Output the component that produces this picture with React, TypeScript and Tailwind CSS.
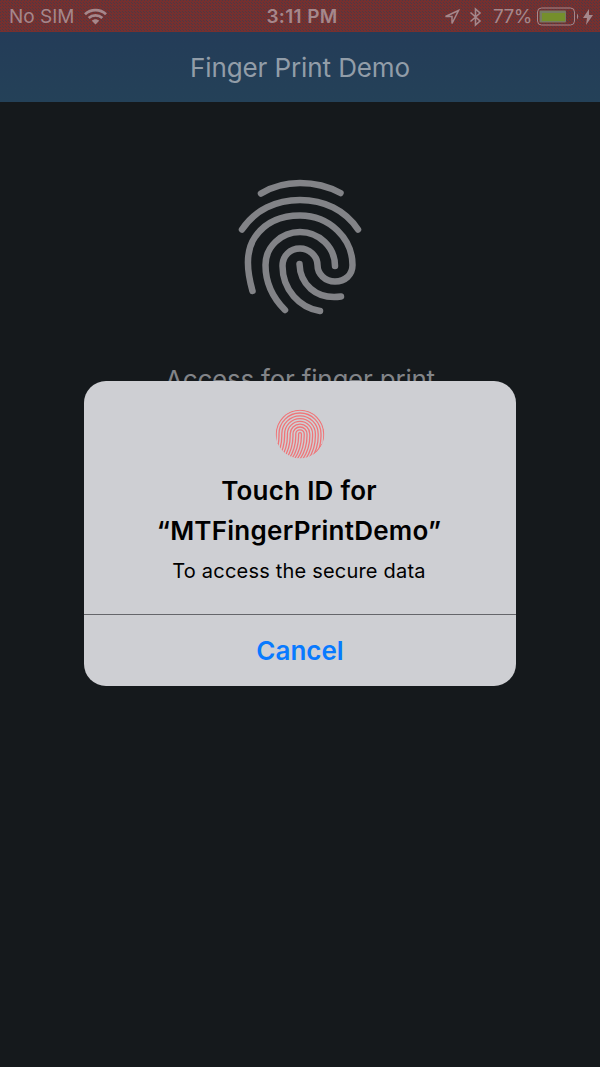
import React from "react";

const big = [
  "M41 33.5Q58 23 80 23T120.5 33",
  "M22 69.5C35 50 56 40 80 40S125 50 138 69.5",
  "M32.5 131C24.5 103 28 87 35 77C45 62.500 61 55.500 80 55.500C110 55.500 132.500 79 132.500 105C132.500 115 125 121.500 115 121.500C105 121.500 97.500 114 97.500 105C97.500 96 89 88.500 80 88.500C70 88.500 62.500 96 62.500 106C62.500 130 80 148 100 151",
  "M65 150C50 135 45.500 120 45.500 105C45.500 87 61 72 80 72C99 72 115 87 115 106",
  "M79.500 104C80 123 95 140 121 136.500",
];

const ridges = [1.4, 4.2, 7, 9.8, 12.6, 15.4, 18.2, 21, 23.8];

function StatusBar() {
  return (
    <div className="grid h-8 grid-cols-[1fr_auto_1fr] items-center bg-[repeating-conic-gradient(#76302f_0_37%,#4f3943_0_50%)] bg-size-[3px_3px] pt-px text-[19px] text-[#a6878b]">
      <div className="flex items-center gap-[9px] pl-[9px]">
        <span className="pt-[2px]">No SIM</span>
        <svg width="23" height="18" viewBox="0 0 23 18" fill="none" stroke="currentColor" strokeWidth="2.800">
          <path d="M1 6.300C7 .8 16 .8 22 6.300M4.700 10C8.500 6.500 14.500 6.500 18.300 10" />
          <path d="M7.800 12.800C10 10.800 13 10.800 15.200 12.800L11.500 16.500Z" fill="currentColor" stroke="none" />
        </svg>
      </div>
      <span className="pt-[2px] pl-[4px] font-semibold tracking-[0.35px]">3:11 PM</span>
      <div className="flex items-center justify-end pr-[7px]">
        <svg width="16" height="16" viewBox="0 0 16 16" fill="none" stroke="currentColor" strokeWidth="1.500"><path d="M14.500 1.500L1.500 7.500H8V14.500Z" /></svg>
        <svg className="ml-[9px]" width="13" height="20" viewBox="0 0 13 20" fill="none" stroke="currentColor" strokeWidth="1.600"><path d="M1.500 5.500L11 14L6.500 18V2L11 6L1.500 14.500" /></svg>
        <span className="ml-[11px] pt-[2px] tracking-[-0.5px]">77%</span>
        <svg className="ml-[5px]" width="44" height="20" viewBox="0 0 44 20">
          <rect x="0.500" y="1" width="37" height="17" rx="4" fill="none" stroke="#a6878b" strokeWidth="1" />
          <rect x="2.500" y="3.500" width="26.500" height="12" rx="1" fill="#777b63" />
          <rect x="5" y="6" width="23" height="8" fill="#758f2c" />
          <path d="M40 6.500Q42.500 9.500 40 12.500Z" fill="#a6878b" />
        </svg>
        <svg className="ml-[2px]" width="10" height="16" viewBox="0 0 10 16" fill="currentColor"><path d="M6 0L0 9H4L3 16L10 6H6Z" /></svg>
      </div>
    </div>
  );
}

function TouchIcon() {
  return (
    <svg width="50" height="50" viewBox="0 0 50 50" fill="none" stroke="#f07578" strokeWidth="1.300">
      <defs><clipPath id="disc"><circle cx="25" cy="25" r="24.300" /></clipPath></defs>
      <g clipPath="url(#disc)">
        {ridges.map((r) => (
          <path
            key={r}
            d={`M${25 - r - 7} 50Q${25 - r} 40 ${25 - r} 27V25A${r} ${r} 0 0 1 ${25 + r} 25V27Q${25 + r} 40 ${25 + r - 7} 50`}
          />
        ))}
        <path d="M3 34Q2 43 1 47M33 50Q41 45 47 35" />
      </g>
    </svg>
  );
}

export default function App() {
  return (
    <div className="relative h-[1067px] w-[600px] overflow-hidden bg-[#15191c] font-['Inter',sans-serif]">
      <StatusBar />
      <header className="flex h-[70px] items-center justify-center bg-linear-to-b from-[#243c58] to-[#244158] text-[26px] tracking-[-0.1px] text-[#929da8]">
        <h1>Finger Print Demo</h1>
      </header>
      <main className="flex flex-col items-center pt-[58px]">
        <svg width="160" height="170" viewBox="0 0 160 170" fill="none" stroke="#828387" strokeWidth="6.500" strokeLinecap="round" strokeLinejoin="round">
          {big.map((d) => <path key={d} d={d} />)}
        </svg>
        <p className="mt-[32px] text-[26px] leading-9 tracking-[-0.22px] text-[#828488]">Access for finger print</p>
      </main>
      <section role="dialog" className="absolute top-[381px] left-[84px] flex h-[305px] w-[432px] flex-col overflow-hidden rounded-[22px] bg-[#cecfd3] text-center text-black">
        <div className="flex h-[233px] flex-col items-center pt-[28px]">
          <TouchIcon />
          <h2 className="mt-[12px] pr-[2px] text-[26px] leading-10 font-semibold tracking-[0.25px]">Touch ID for<br />“MTFingerPrintDemo”</h2>
          <p className="mt-[6px] pr-[2px] text-[20px] leading-7 tracking-[0.2px]">To access the secure data</p>
        </div>
        <button className="flex-1 border-t border-[#65666a] text-[26px] font-semibold text-[#087aff]">Cancel</button>
      </section>
    </div>
  );
}
